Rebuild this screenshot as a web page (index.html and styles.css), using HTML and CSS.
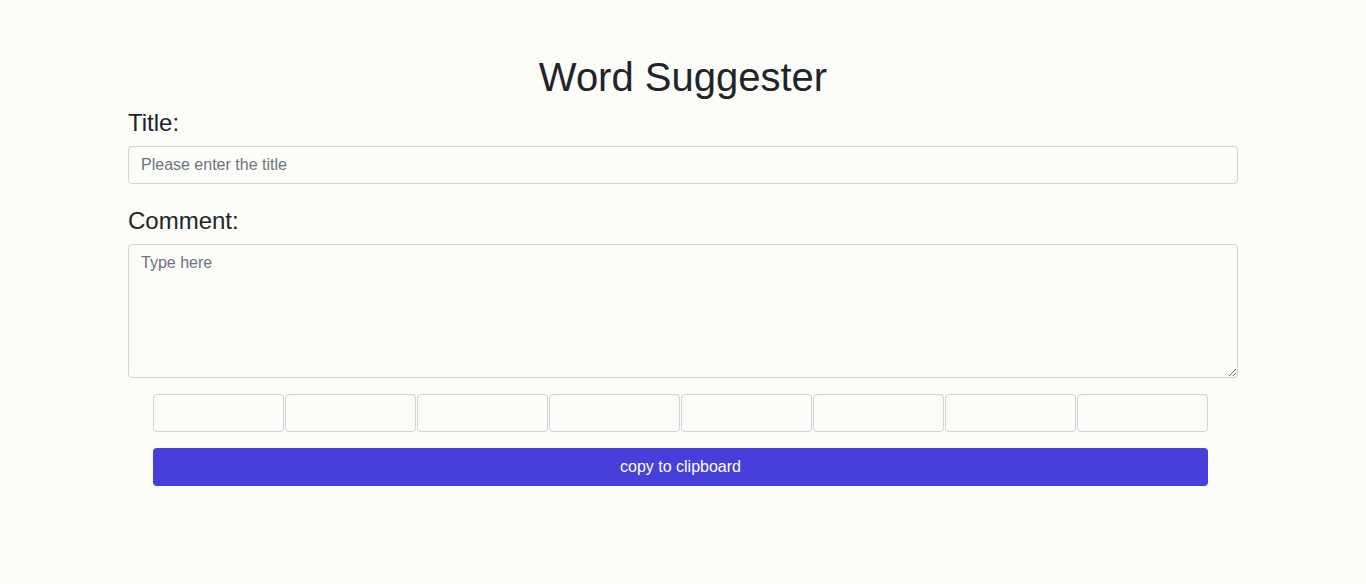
FILE: index.html
```html
<!DOCTYPE html>
<html lang="en">
<head>
<meta charset="utf-8">
<title>Word Suggester</title>
<link rel="stylesheet" href="styles.css">
</head>
<body>
<div class="container">
  <h1 class="title">Word Suggester</h1>
  <div class="form-group">
    <h4 class="label">Title:</h4>
    <input class="form-control" type="text" placeholder="Please enter the title">
  </div>
  <div class="form-group">
    <h4 class="label">Comment:</h4>
    <textarea class="form-control area" rows="5" placeholder="Type here"></textarea>
  </div>
  <div class="suggest">
    <div class="boxes">
      <input class="box" type="text">
      <input class="box" type="text">
      <input class="box" type="text">
      <input class="box" type="text">
      <input class="box" type="text">
      <input class="box" type="text">
      <input class="box" type="text">
      <input class="box" type="text">
    </div>
    <button class="copy" type="button">copy to clipboard</button>
  </div>
</div>
</body>
</html>
```

FILE: styles.css
```css
html, body {
  margin: 0;
  padding: 0;
}
body {
  background: #fcfcf9;
  font-family: "Liberation Sans", Arial, sans-serif;
  color: #212529;
  font-size: 16px;
  line-height: 1.5;
}
.container {
  width: 1110px;
  margin: 0 auto;
  padding-top: 53px;
}
.title {
  margin: 0 0 8px;
  font-size: 40px;
  font-weight: 400;
  line-height: 1.2;
  text-align: center;
}
.form-group {
  margin-bottom: 23px;
}
.label {
  margin: 0 0 8px;
  font-size: 24px;
  font-weight: 400;
  line-height: 1.2;
}
.form-control {
  display: block;
  box-sizing: border-box;
  width: 100%;
  height: 38px;
  padding: 6px 12px;
  font-family: inherit;
  font-size: 16px;
  line-height: 1.5;
  color: #495057;
  background: transparent;
  border: 1px solid #ced4da;
  border-radius: 4px;
  margin: 0;
}
.form-control::placeholder {
  color: #6c757d;
}
.area {
  height: 134px;
  resize: vertical;
}
.form-group:nth-of-type(2) {
  margin-bottom: 16px;
}
.suggest {
  padding-left: 25px;
  width: 1055px;
}
.boxes {
  display: flex;
  gap: 1px;
  margin-bottom: 16px;
}
.box {
  box-sizing: border-box;
  width: 131px;
  height: 38px;
  margin: 0;
  padding: 6px 12px;
  border: 1px solid #ced4da;
  border-radius: 4px;
  background: transparent;
  font-family: inherit;
  font-size: 16px;
}
.copy {
  display: block;
  width: 100%;
  height: 38px;
  border: none;
  border-radius: 4px;
  background: #473fdc;
  color: #ffffff;
  font-family: inherit;
  font-size: 16px;
  line-height: 1.5;
  padding: 6px 12px;
  cursor: pointer;
}
```
